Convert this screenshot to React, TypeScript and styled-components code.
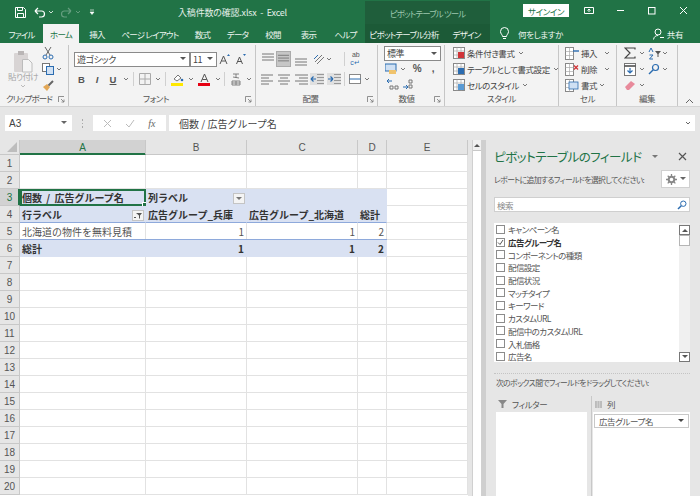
import React from "react";
import styled, { createGlobalStyle } from "styled-components";

const UI = `"Noto Sans CJK JP", "Noto Sans", sans-serif`;

const Global = createGlobalStyle`
  html, body { margin: 0; padding: 0; width: 700px; height: 496px; overflow: hidden; background: #e6e6e6; }
  #root { width: 700px; height: 496px; }
  * { box-sizing: border-box; }
`;

const Page = styled.div`
  width: 700px; height: 496px; overflow: hidden; display: flex; flex-direction: column;
  font-family: ${UI}; font-size: 8.5px; letter-spacing: -0.4px; color: #444; font-feature-settings: "palt";
`;

/* Title bar */
const TitleBar = styled.div`
  height: 24px; background: #217346; display: flex; align-items: stretch; color: #fff; flex: none;
`;
const Qat = styled.div`
  width: 160px; flex: none; display: flex; align-items: center; padding-left: 14px;
`;
const QatBtn = styled.span<{ $w: number; $dim?: boolean }>`
  width: ${p => p.$w}px; display: flex; align-items: center; justify-content: center; opacity: ${p => (p.$dim ? 0.3 : 1)};
`;
const DocTitle = styled.div`
  width: 145px; flex: none; display: flex; align-items: center; justify-content: center; font-size: 9px; letter-spacing: -0.2px; color: #e6f0ea; white-space: nowrap;
`;
const TitleGap = styled.div`width: 60px; flex: none;`;
const ContextHead = styled.div`
  width: 125px; flex: none; background: #1f5e3b; margin-top: 1px; display: flex; align-items: center; justify-content: center;
  color: #9cc7ae; letter-spacing: -0.9px;
`;
const WindowArea = styled.div`
  flex: 1; display: flex; align-items: center; padding-bottom: 3px;
`;
const SignIn = styled.span`
  margin-left: 33px; width: 46px; height: 13px; background: #fff; color: #217346;
  display: flex; align-items: center; justify-content: center; margin-right: 4px;
`;
const WinBtn = styled.span`
  width: 31.5px; display: flex; justify-content: center; align-items: center;
`;

/* Tabs */
const TabBar = styled.div`
  height: 19px; background: #217346; display: flex; align-items: stretch; flex: none; color: #fff; letter-spacing: -0.8px;
`;
const Tab = styled.div<{ $w: number; $active?: boolean }>`
  width: ${p => p.$w}px; flex: none; display: flex; align-items: center; justify-content: center; white-space: nowrap;
  color: ${p => (p.$active ? "#217346" : "#eef5f0")};
  background: ${p => (p.$active ? "#f3f3f3" : "transparent")};
`;
const ContextTabs = styled.div`
  width: 125px; flex: none; background: #1c5a37; display: flex; align-items: stretch;
`;
const TellMe = styled.div`
  flex: 1; display: flex; align-items: center; padding-left: 10px; gap: 9px; color: #eef5f0; letter-spacing: -0.4px;
`;
const Share = styled.div`
  margin-left: auto; padding-right: 17px; display: flex; align-items: center; gap: 3px;
`;

/* Ribbon */
const Ribbon = styled.div`
  height: 64px; background: #f3f3f3; display: flex; flex: none; border-bottom: 1px solid #d4d4d4;
`;
const Group = styled.div<{ $w: number }>`
  width: ${p => p.$w}px; flex: none; display: flex; flex-direction: column; border-right: 1px solid #c6c6c6; margin-top: 2px;
`;
const GroupBody = styled.div<{ $pad?: number }>`
  flex: 1; min-height: 0; display: flex; padding-left: ${p => p.$pad ?? 0}px;
`;
const Stack = styled.div<{ $gap?: number; $top?: number }>`
  display: flex; flex-direction: column; gap: ${p => p.$gap ?? 0}px; padding-top: ${p => p.$top ?? 0}px;
`;
const Row = styled.div<{ $h?: number }>`
  display: flex; align-items: center; height: ${p => p.$h ?? 16}px; white-space: nowrap;
`;
const GroupLabel = styled.div<{ $pr?: number; $tight?: boolean }>`
  height: 14px; flex: none; display: flex; align-items: center; justify-content: center; color: #555; position: relative;
  padding-right: ${p => p.$pr ?? 0}px; padding-bottom: 2px; letter-spacing: ${p => (p.$tight ? "-0.9px" : "-0.4px")};
`;
const Launcher = styled.span`
  position: absolute; right: 3px; top: 4px; display: flex;
`;
const CollapseCol = styled.div`
  flex: 1; display: flex; align-items: flex-end; justify-content: center; padding-bottom: 2px;
`;
const Tool = styled.span<{ $w: number; $sel?: boolean }>`
  width: ${p => p.$w}px; height: 16px; flex: none; display: flex; align-items: center; justify-content: center;
  color: #444; background: ${p => (p.$sel ? "#c6c6c6" : "transparent")};
  border: ${p => (p.$sel ? "1px solid #ababab" : "none")};
`;
const RowSep = styled.span<{ $ml?: number }>`
  width: 1px; height: 14px; background: #d0d0d0; margin: 0 3px 0 ${p => p.$ml ?? 2}px; flex: none;
`;
const Select = styled.div<{ $w: number; $dark?: boolean }>`
  width: ${p => p.$w}px; height: 15px; flex: none; background: #fff; border: 1px solid ${p => (p.$dark ? "#8a8a8a" : "#ababab")};
  display: flex; align-items: center; justify-content: space-between; padding: 0 3px 0 2px; font-size: 9px; color: #444;
`;
const PasteCol = styled.div`
  width: 34px; flex: none; margin-left: 6px; display: flex; flex-direction: column; align-items: center; color: #a8a8a8; padding-top: 5px; letter-spacing: -0.6px;
`;
const PasteText = styled.span`margin-top: -2px; margin-bottom: 3px; line-height: 10px; white-space: nowrap;`;
const Letter = styled.span<{ $i?: boolean; $u?: boolean }>`
  font-family: "Liberation Sans", sans-serif; font-weight: 700; font-size: 9.5px; color: #555; letter-spacing: 0;
  font-style: ${p => (p.$i ? "italic" : "normal")}; text-decoration: ${p => (p.$u ? "underline" : "none")};
`;
const StyleText = styled.span`margin-left: 2px; color: #444;`;
const SymbolText = styled.span`font-family: "Liberation Sans", sans-serif; font-size: 10px; color: #555; font-weight: 700;`;
const WrapGlyph = styled.span`
  display: flex; flex-direction: column; align-items: flex-end; font-family: "Liberation Sans", sans-serif; font-size: 7px; line-height: 8px; color: #555; letter-spacing: 0;
`;
const WrapSecond = styled.span`color: #2b6cb0;`;

/* Formula bar */
const FormulaBar = styled.div`
  height: 33px; flex: none; background: #e6e6e6; display: flex; padding: 8px 5px 3px 5px; align-items: flex-start;
`;
const NameBox = styled.div`
  width: 67px; height: 16px; background: #fff; display: flex; align-items: center; justify-content: space-between; padding: 0 5px 0 4px;
  font-family: "Liberation Sans", sans-serif; font-size: 10px; letter-spacing: 0; color: #444;
`;
const Dots = styled.span`
  width: 21px; display: flex; flex-direction: column; align-items: center; gap: 2px; padding-top: 4px;
`;
const Dot = styled.i`width: 1.5px; height: 1.5px; background: #aaa; display: block;`;
const FxBox = styled.div`
  width: 73px; height: 16px; background: #fff; display: flex; align-items: center; justify-content: space-around; padding: 0 4px;
`;
const FxText = styled.span`font-family: "Liberation Serif", serif; font-style: italic; font-size: 10px; letter-spacing: 0; color: #666;`;
const FormulaInput = styled.div`
  flex: 1; margin-left: 3px; height: 16px; background: #fff; display: flex; align-items: center; justify-content: space-between;
  padding: 0 4px 0 10px; font-size: 10px; letter-spacing: 0; color: #444; font-feature-settings: normal;
`;

/* Main */
const Main = styled.div`flex: 1; min-height: 0; display: flex; background: #e6e6e6;`;
const Sheet = styled.div`width: 468px; flex: none; background: #fff; overflow: hidden; letter-spacing: 0;`;
const SheetRow = styled.div<{ $h: number }>`
  display: grid; grid-template-columns: 20px 126px 101px 111px 29px 81px; height: ${p => p.$h}px;
`;
const Corner = styled.div`
  background: #e6e6e6; border-right: 1px solid #c8c8c8; border-bottom: 1px solid #c8c8c8; display: flex; align-items: flex-end; justify-content: flex-end; padding: 0 2px 2px 0;
`;
const CornerTri = styled.i`
  width: 0; height: 0; border-left: 10px solid transparent; border-bottom: 10px solid #bdbdbd; display: block;
`;
const ColHead = styled.div<{ $sel?: boolean }>`
  background: ${p => (p.$sel ? "#d2d2d2" : "#e6e6e6")}; border-right: 1px solid #c8c8c8;
  border-bottom: 1px solid ${p => (p.$sel ? "#217346" : "#c8c8c8")}; box-shadow: ${p => (p.$sel ? "inset 0 -1px 0 #217346" : "none")};
  display: flex; align-items: center; justify-content: center; font-family: "Liberation Sans", sans-serif; font-size: 10px;
  color: ${p => (p.$sel ? "#217346" : "#555")};
`;
const RowHead = styled(ColHead)<{ $sel?: boolean }>`
  border-right: 1px solid ${p => (p.$sel ? "#217346" : "#c8c8c8")}; border-bottom: 1px solid #c8c8c8;
  box-shadow: ${p => (p.$sel ? "inset -1px 0 0 #217346" : "none")};
`;
const Cell = styled.div<{ $fill?: boolean; $bold?: boolean; $right?: boolean; $line?: "top" | "bottom"; $between?: boolean }>`
  position: relative; display: flex; align-items: center; white-space: nowrap; padding: 0 2px;
  justify-content: ${p => (p.$between ? "space-between" : p.$right ? "flex-end" : "flex-start")};
  background: ${p => (p.$fill ? "#d9e1f2" : "#fff")};
  font-size: 10px; word-spacing: 2px; font-weight: ${p => (p.$bold ? 700 : 400)}; color: ${p => (p.$bold ? "#333" : "#555")};
  font-feature-settings: normal;
  border-right: 1px solid ${p => (p.$fill ? "#d9e1f2" : "#e2e2e2")};
  border-bottom: 1px solid ${p => (p.$line === "bottom" ? "#8ea9db" : p.$fill ? "#d9e1f2" : "#e2e2e2")};
  box-shadow: ${p => (p.$line === "top" ? "0 -1px 0 #8ea9db" : "none")};
`;
const ActiveCell = styled(Cell)`
  outline: 2px solid #217346; outline-offset: -2px; padding-left: 2px;
`;
const FillHandle = styled.i`
  position: absolute; right: -2px; bottom: -2px; width: 5px; height: 5px; background: #217346; border: 1px solid #fff; display: block;
`;
const FilterBtn = styled.span`
  width: 12px; height: 11px; background: #f4f4f4; border: 1px solid #c4c4c4; display: flex; align-items: center; justify-content: center; flex: none;
  align-self: flex-end; margin-right: -1px; margin-bottom: 1px;
`;

const VScroll = styled.div`
  width: 18px; flex: none; padding-left: 4px; display: flex; border-right: 4px solid #cfcfcf;
`;
const VTrack = styled.div`
  width: 10px; background: #fff; border-left: 1px solid #d0d0d0; border-right: 1px solid #d0d0d0; display: flex; flex-direction: column;
`;
const VUp = styled.div`
  height: 11px; background: #f0f0f0; border-bottom: 1px solid #c8c8c8; display: flex; align-items: center; justify-content: center;
`;

/* Panel */
const Panel = styled.div`
  flex: 1; padding: 0 10px 0 8px; display: flex; flex-direction: column; min-width: 0;
`;
const PanelHead = styled.div`
  height: 23px; margin-top: 5px; display: flex; align-items: center; flex: none;
`;
const PanelTitle = styled.div`font-size: 12.5px; letter-spacing: -0.5px; color: #217346; white-space: nowrap; width: 158px;`;
const PanelClose = styled.span`margin-left: auto; margin-right: 3px; display: flex;`;
const PickRow = styled.div`
  height: 18px; margin-top: 2px; display: flex; align-items: center; justify-content: space-between; font-size: 7.8px; letter-spacing: -0.6px; color: #555; flex: none; white-space: nowrap;
`;
const GearBox = styled.span`
  width: 29px; height: 18px; background: #fff; border: 1px solid #d0d0d0; display: flex; align-items: center; justify-content: center; gap: 3px;
`;
const SearchBox = styled.div`
  height: 15px; margin-top: 9px; background: #fff; border: 1px solid #cfcfcf; display: flex; align-items: center; justify-content: space-between;
  padding: 0 2px; color: #888; flex: none;
`;
const FieldList = styled.div`
  height: 139px; margin-top: 11px; background: #fff; display: flex; flex: none; overflow: hidden;
`;
const Fields = styled.div`flex: 1; padding-top: 0;`;
const Field = styled.div<{ $on?: boolean }>`
  height: 12.7px; display: flex; align-items: center; gap: 3px; padding-left: 2px; white-space: nowrap;
  letter-spacing: -0.6px; color: ${p => (p.$on ? "#333" : "#555")}; font-weight: ${p => (p.$on ? 700 : 400)};
`;
const Check = styled.span`
  width: 9px; height: 9px; border: 1px solid #8c8c8c; background: #fff; display: flex; align-items: center; justify-content: center; flex: none;
`;
const ListScroll = styled.div`
  width: 11px; flex: none; background: #f0f0f0; display: flex; flex-direction: column; justify-content: space-between; padding-top: 2px;
`;
const ScrollTop = styled.div`display: flex; flex-direction: column;`;
const ScrollBtn = styled.div<{ $h: number; $dark?: boolean }>`
  height: ${p => p.$h}px; background: #fff; border: 1px solid ${p => (p.$dark ? "#777" : "#b5b5b5")}; display: flex; align-items: center; justify-content: center;
`;
const DottedLine = styled.div`height: 0; margin-top: 11px; border-top: 1px dotted #c4c4c4; flex: none;`;
const DragHint = styled.div`
  margin-top: 1px; height: 14px; padding-left: 2px; display: flex; align-items: center; font-size: 7.8px; letter-spacing: -0.6px; color: #555; white-space: nowrap; flex: none;
`;
const Areas = styled.div`flex: 1; margin-top: 7px; display: grid; grid-template-columns: 93px 1fr; min-height: 0;`;
const Area = styled.div<{ $right?: boolean }>`
  display: flex; flex-direction: column; min-height: 0; margin-left: 2px;
  ${p => (p.$right ? "border-left: 1px solid #c8c8c8; margin-left: 4px; padding-left: 1px;" : "")}
`;
const AreaHead = styled.div`
  height: 16px; flex: none; display: flex; align-items: center; gap: 5px; padding-left: 2px; color: #555;
`;
const AreaBox = styled.div`flex: 1; background: #fff; padding: 2px 1px;`;
const AreaItem = styled.div`
  height: 14px; border: 1px solid #c8c8c8; background: #fff; display: flex; align-items: center; justify-content: space-between;
  padding: 0 4px; color: #555;
`;

/* Icons */
const Chev = ({ c = "#777" }: { c?: string }) => (
  <svg width="6" height="4" viewBox="0 0 6 4"><path d="M1 1l2 2 2-2" fill="none" stroke={c} /></svg>
);
const Tri = ({ c = "#555", up }: { c?: string; up?: boolean }) => (
  <svg width="6" height="4" viewBox="0 0 6 4"><path d={up ? "M0 4h6L3 1z" : "M0 0h6L3 3z"} fill={c} /></svg>
);
const Launch = () => (
  <svg width="7" height="7" viewBox="0 0 7 7"><path d="M.5 6V.5H6M3 3l3 3M6 3.500V6H3.500" fill="none" stroke="#777" strokeWidth=".8" /></svg>
);
const Lines = ({ kind }: { kind: "l" | "c" | "r" }) => {
  const a = kind === "l" ? [[1, 13], [1, 9], [1, 13], [1, 9]] : kind === "c" ? [[2, 14], [4, 12], [2, 14], [4, 12]] : [[2, 15], [6, 15], [2, 15], [6, 15]];
  return (
    <svg width="16" height="14" viewBox="0 0 16 14">
      {a.map((v, i) => <path key={i} d={`M${v[0]} ${3 + i * 3}H${v[1]}`} stroke="#777" />)}
    </svg>
  );
};
const VAlign = ({ y }: { y: number }) => (
  <svg width="14" height="14" viewBox="0 0 14 14">
    {[0, 3, 6].map(d => <path key={d} d={`M1 ${y + d}H13`} stroke="#777" />)}
  </svg>
);
const Indent = ({ dir }: { dir: "in" | "out" }) => (
  <svg width="14" height="14" viewBox="0 0 14 14">
    <rect x="0" y="1" width="14" height="12" fill="#e0e0e0" />
    {[3, 6, 9, 12].map(y => <path key={y} d={`M7 ${y - .5}H14`} stroke="#999" />)}
    <path d={dir === "out" ? "M1 7h5M1 7l2.500-2.500M1 7l2.500 2.500" : "M6 7H1M6 7L3.500 4.500M6 7L3.500 9.500"} fill="none" stroke="#2b6cb0" strokeWidth="1.2" />
  </svg>
);
const StyleIcon = ({ accent }: { accent: string }) => (
  <svg width="12" height="12" viewBox="0 0 12 12">
    <rect x=".5" y=".5" width="11" height="11" fill="#fff" stroke="#888" />
    <path d="M.5 4h11M.5 8h11M4 .5v11M8 .5v11" stroke="#aaa" strokeWidth=".7" />
    <rect x="5" y="5" width="6" height="6" fill={accent} />
  </svg>
);
const CellIcon = ({ mark }: { mark: "plus" | "x" | "fmt" }) => (
  <svg width="14" height="13" viewBox="0 0 14 13">
    <rect x=".5" y=".5" width="8" height="12" fill="#fff" stroke="#888" />
    <path d="M.5 4.500h8M.5 8.500h8M4.500 .5v12" stroke="#aaa" strokeWidth=".7" />
    {mark === "plus" && <path d="M8 4h6" stroke="#2b6cb0" strokeWidth="1.4" />}
    {mark === "x" && <path d="M9 2.500l4 4M13 2.500l-4 4" stroke="#d13438" strokeWidth="1.3" />}
    {mark === "fmt" && <rect x="4" y="3" width="9" height="7" fill="#cfe0f3" stroke="#2b6cb0" strokeWidth=".8" />}
  </svg>
);
const FunnelSmall = () => (
  <svg width="8" height="7" viewBox="0 0 8 7"><path d="M2 1h6L6 3.500V6.500H5V3.500z" fill="#555" /><path d="M0 5h2v1H0z" fill="#555" /></svg>
);

const colTemplate = ["A", "B", "C", "D", "E"];
const fields = ["キャンペーン名", "広告グループ名", "コンポーネントの種類", "配信設定", "配信状況", "マッチタイプ", "キーワード", "カスタムURL", "配信中のカスタムURL", "入札価格", "広告名"];

const PlainRow = ({ n }: { n: number }) => (
  <SheetRow $h={17}>
    <RowHead>{n}</RowHead>
    <Cell /><Cell /><Cell /><Cell /><Cell />
  </SheetRow>
);

export default function App() {
  const plain = Array.from({ length: 14 }, (_, i) => i + 7);
  return (
    <Page>
      <Global />
      <TitleBar>
        <Qat>
          <QatBtn $w={13}>
            <svg width="11" height="11" viewBox="0 0 11 11"><path d="M.5.5h8l2 2v8H.5z" fill="none" stroke="#fff" /><path d="M2.500.5v3h5v-3M2.500 10.500v-4h6v4" fill="none" stroke="#fff" /></svg>
          </QatBtn>
          <QatBtn $w={6} />
          <QatBtn $w={13}>
            <svg width="12" height="11" viewBox="0 0 12 11"><path d="M1 4h6.500a3 3 0 010 6H5M1 4l3-3M1 4l3 3" fill="none" stroke="#fff" strokeWidth="1.2" /></svg>
          </QatBtn>
          <QatBtn $w={9}><Chev c="#cfe3d7" /></QatBtn>
          <QatBtn $w={4} />
          <QatBtn $w={14} $dim>
            <svg width="12" height="11" viewBox="0 0 12 11"><path d="M11 4H4.500a3 3 0 000 6H7M11 4L8 1M11 4L8 7" fill="none" stroke="#fff" strokeWidth="1.2" /></svg>
          </QatBtn>
          <QatBtn $w={9} $dim><Chev c="#fff" /></QatBtn>
          <QatBtn $w={20}>
            <svg width="6" height="6" viewBox="0 0 6 6"><path d="M1 1h4M1 3h4L3 5.500z" fill="#fff" stroke="#fff" strokeWidth=".6" /></svg>
          </QatBtn>
        </Qat>
        <DocTitle>入稿件数の確認.xlsx&nbsp; -&nbsp; Excel</DocTitle>
        <TitleGap />
        <ContextHead>ピボットテーブル ツール</ContextHead>
        <WindowArea>
          <SignIn>サインイン</SignIn>
          <WinBtn>
            <svg width="10" height="9" viewBox="0 0 10 9"><path d="M.5 1.500h9v6h-9z" fill="none" stroke="#fff" /><path d="M5 6V3M3.500 4.500L5 3l1.500 1.500" fill="none" stroke="#fff" /></svg>
          </WinBtn>
          <WinBtn><svg width="9" height="3" viewBox="0 0 9 3"><path d="M1 1.500h7" stroke="#fff" /></svg></WinBtn>
          <WinBtn><svg width="9" height="9" viewBox="0 0 9 9"><rect x="1.500" y="1.500" width="6.500" height="6.500" fill="none" stroke="#fff" /></svg></WinBtn>
          <WinBtn><svg width="9" height="9" viewBox="0 0 9 9"><path d="M1 1l7 7M8 1L1 8" stroke="#fff" /></svg></WinBtn>
        </WindowArea>
      </TitleBar>

      <TabBar>
        <Tab $w={43}>ファイル</Tab>
        <Tab $w={36} $active>ホーム</Tab>
        <Tab $w={36}>挿入</Tab>
        <Tab $w={70}>ページ レイアウト</Tab>
        <Tab $w={35}>数式</Tab>
        <Tab $w={35}>データ</Tab>
        <Tab $w={36}>校閲</Tab>
        <Tab $w={35}>表示</Tab>
        <Tab $w={39}>ヘルプ</Tab>
        <ContextTabs>
          <Tab $w={78}>ピボットテーブル分析</Tab>
          <Tab $w={47}>デザイン</Tab>
        </ContextTabs>
        <TellMe>
          <svg width="9" height="13" viewBox="0 0 9 13"><path d="M2.500 9.500C2.500 7.500.5 7 .5 4.500a4 4 0 018 0C8.500 7 6.500 7.500 6.500 9.500zM3 11.500h3" fill="none" stroke="#fff" /></svg>
          <span>何をしますか</span>
          <Share>
            <svg width="11" height="12" viewBox="0 0 11 12"><circle cx="5" cy="4" r="3" fill="none" stroke="#fff" /><path d="M.5 11.500C1 8.500 3 7.500 5 7.500M7 9.500h4" fill="none" stroke="#fff" /></svg>
            <span>共有</span>
          </Share>
        </TellMe>
      </TabBar>

      <Ribbon>
        <Group $w={69}>
          <GroupBody>
            <PasteCol>
              <svg width="20" height="23" viewBox="0 0 20 23">
                <rect x="1" y="3" width="14" height="19" rx="1" fill="#d8d4d4" />
                <rect x="5" y="1" width="6" height="4" fill="#b9b5b5" />
                <path d="M9.500 9.500h6l3.500 3.500v9h-9.500z" fill="#f5f5f5" stroke="#bcbcbc" />
              </svg>
              <PasteText>貼り付け</PasteText>
              <Chev c="#bbb" />
            </PasteCol>
            <Stack>
              <Row>
                <Tool $w={16}>
                  <svg width="12" height="14" viewBox="0 0 12 14"><path d="M3 1l5 8M9 1L4 9" stroke="#666" /><circle cx="3" cy="11" r="2" fill="none" stroke="#2b6cb0" /><circle cx="9" cy="11" r="2" fill="none" stroke="#2b6cb0" /></svg>
                </Tool>
              </Row>
              <Row>
                <Tool $w={16}>
                  <svg width="12" height="12" viewBox="0 0 12 12"><rect x=".5" y=".5" width="7" height="8" fill="#fff" stroke="#777" /><rect x="4.500" y="3.500" width="7" height="8" fill="#cfe0f3" stroke="#2b6cb0" /></svg>
                </Tool>
                <Chev />
              </Row>
              <Row>
                <Tool $w={16}>
                  <svg width="13" height="13" viewBox="0 0 13 13"><path d="M1 8l4-3 3 3-3 4z" fill="#e3a857" /><path d="M6.500 6.500L11 2" stroke="#666" strokeWidth="2" /></svg>
                </Tool>
              </Row>
            </Stack>
          </GroupBody>
          <GroupLabel $pr={10} $tight>クリップボード<Launcher><Launch /></Launcher></GroupLabel>
        </Group>

        <Group $w={187}>
          <GroupBody $pad={5}>
            <Stack $top={6} $gap={4}>
              <Row>
                <Select $w={116} $dark>遊ゴシック<Tri /></Select>
                <Select $w={27} $dark>11<Tri /></Select>
                <Tool $w={16}>
                  <svg width="12" height="12" viewBox="0 0 12 12"><path d="M1 11l3.500-8L8 11M2.500 8h4" fill="none" stroke="#555" /><path d="M8 3l1.500-2L11 3z" fill="#2b6cb0" /></svg>
                </Tool>
                <Tool $w={16}>
                  <svg width="12" height="12" viewBox="0 0 12 12"><path d="M1.500 11L4.500 4l3 7M2.500 8.500h4" fill="none" stroke="#555" /><path d="M8 1l1.500 2L11 1z" fill="#2b6cb0" /></svg>
                </Tool>
              </Row>
              <Row>
                <Tool $w={15}><Letter>B</Letter></Tool>
                <Tool $w={16}><Letter $i>I</Letter></Tool>
                <Tool $w={16}><Letter $u>U</Letter></Tool>
                <Tool $w={10}><Chev /></Tool>
                <RowSep />
                <Tool $w={16}>
                  <svg width="12" height="12" viewBox="0 0 12 12"><path d="M.5.5h11v11H.5zM6 .5v11M.5 6h11" fill="none" stroke="#aaa" /></svg>
                </Tool>
                <Tool $w={10}><Chev /></Tool>
                <RowSep />
                <Tool $w={17}>
                  <svg width="13" height="14" viewBox="0 0 13 14"><path d="M3 7l4-4 3 3-4 3z" fill="#fff" stroke="#777" /><circle cx="11" cy="8" r="1.300" fill="#2b6cb0" /><rect x="0" y="11" width="12" height="3" fill="#ffe800" /></svg>
                </Tool>
                <Tool $w={9}><Chev /></Tool>
                <Tool $w={18}>
                  <svg width="13" height="14" viewBox="0 0 13 14"><path d="M3 10l3.500-8L10 10M4.300 7.500h4.500" fill="none" stroke="#555" /><rect x="0" y="11" width="12" height="3" fill="#e60012" /></svg>
                </Tool>
                <Tool $w={9}><Chev /></Tool>
                <RowSep />
                <Tool $w={16}>
                  <svg width="10" height="14" viewBox="0 0 10 14"><path d="M2 2h6M5 2v4M2 5l6 1M1 9h8v4H1zM1 11h8M5 9v4" fill="none" stroke="#777" strokeWidth=".9" /></svg>
                </Tool>
                <Tool $w={10}><Chev /></Tool>
              </Row>
            </Stack>
          </GroupBody>
          <GroupLabel $pr={12}>フォント<Launcher><Launch /></Launcher></GroupLabel>
        </Group>

        <Group $w={122}>
          <GroupBody $pad={4}>
            <Stack $top={6} $gap={4}>
              <Row>
                <Tool $w={16}><VAlign y={2} /></Tool>
                <Tool $w={15} $sel><VAlign y={3} /></Tool>
                <Tool $w={20}><VAlign y={7} /></Tool>
                <Tool $w={15}>
                  <svg width="12" height="13" viewBox="0 0 12 13"><path d="M2 9l7-7M4 11l7-7" stroke="#777" /><path d="M1 6l4-4" stroke="#2b6cb0" /></svg>
                </Tool>
                <Tool $w={6}><Chev /></Tool>
                <RowSep $ml={12} />
                <Tool $w={14}>
                  <WrapGlyph>ab<WrapSecond>c↵</WrapSecond></WrapGlyph>
                </Tool>
              </Row>
              <Row>
                <Tool $w={16}><Lines kind="l" /></Tool>
                <Tool $w={16}><Lines kind="c" /></Tool>
                <Tool $w={17}><Lines kind="r" /></Tool>
                <Tool $w={16}><Indent dir="out" /></Tool>
                <Tool $w={17}><Indent dir="in" /></Tool>
                <RowSep />
                <Tool $w={14}>
                  <svg width="12" height="12" viewBox="0 0 12 12"><rect x=".5" y="1.500" width="11" height="9" fill="#fff" stroke="#888" /><path d="M.5 6h11" stroke="#2b6cb0" /></svg>
                </Tool>
                <Tool $w={10}><Chev /></Tool>
              </Row>
            </Stack>
          </GroupBody>
          <GroupLabel $pr={12}>配置<Launcher><Launch /></Launcher></GroupLabel>
        </Group>

        <Group $w={67}>
          <GroupBody $pad={6}>
            <Stack $top={1}>
              <Select $w={57} $dark>標準<Tri /></Select>
              <Row $h={15}>
                <Tool $w={14}>
                  <svg width="12" height="12" viewBox="0 0 12 12"><rect x="0" y="1" width="11" height="7" fill="#cfe0f3" stroke="#2b6cb0" /><rect x="4" y="7" width="7" height="4" fill="#f0c36d" /></svg>
                </Tool>
                <Tool $w={10}><Chev /></Tool>
                <Tool $w={18}><SymbolText>%</SymbolText></Tool>
                <Tool $w={14}><SymbolText>,</SymbolText></Tool>
              </Row>
              <Row $h={15}>
                <Tool $w={16}>
                  <svg width="13" height="12" viewBox="0 0 13 12"><path d="M1 3h5M1 3l2-2M1 3l2 2" fill="none" stroke="#2b6cb0" /><path d="M4 8h3v3H4zM9 8h3v3H9z" fill="none" stroke="#777" /></svg>
                </Tool>
                <Tool $w={16}>
                  <svg width="13" height="12" viewBox="0 0 13 12"><path d="M7 2h3v3H7zM7 7h3v3H7z" fill="none" stroke="#777" /><path d="M1 9h5M6 9L4 7M6 9l-2 2" fill="none" stroke="#2b6cb0" /></svg>
                </Tool>
              </Row>
            </Stack>
          </GroupBody>
          <GroupLabel $pr={9}>数値<Launcher><Launch /></Launcher></GroupLabel>
        </Group>

        <Group $w={114}>
          <GroupBody $pad={8}>
            <Stack>
              <Row><StyleIcon accent="#d13438" /><StyleText>条件付き書式</StyleText><Tool $w={12}><Chev /></Tool></Row>
              <Row><StyleIcon accent="#2b6cb0" /><StyleText>テーブルとして書式設定</StyleText><Tool $w={12}><Chev /></Tool></Row>
              <Row><StyleIcon accent="#5a9bd5" /><StyleText>セルのスタイル</StyleText><Tool $w={12}><Chev /></Tool></Row>
            </Stack>
          </GroupBody>
          <GroupLabel>スタイル</GroupLabel>
        </Group>

        <Group $w={58}>
          <GroupBody $pad={6}>
            <Stack>
              <Row><CellIcon mark="plus" /><StyleText>挿入</StyleText><Tool $w={20}><Chev /></Tool></Row>
              <Row><CellIcon mark="x" /><StyleText>削除</StyleText><Tool $w={20}><Chev /></Tool></Row>
              <Row><CellIcon mark="fmt" /><StyleText>書式</StyleText><Tool $w={10}><Chev /></Tool></Row>
            </Stack>
          </GroupBody>
          <GroupLabel>セル</GroupLabel>
        </Group>

        <Group $w={61}>
          <GroupBody $pad={6}>
            <Stack>
              <Row>
                <Tool $w={14}><svg width="12" height="12" viewBox="0 0 12 12"><path d="M11 2.500V1H1l5 5-5 5h10V9.500" fill="none" stroke="#444" strokeWidth="1.200" /></svg></Tool>
                <Tool $w={10}><Chev /></Tool>
                <Tool $w={14}>
                  <svg width="13" height="13" viewBox="0 0 13 13"><path d="M1 5l2-4 2 4M1.500 8h3.500L1.500 12H5" fill="none" stroke="#2b6cb0" /><path d="M7 4h6L10.500 7v3h-1V7z" fill="#555" /></svg>
                </Tool>
                <Tool $w={8}><Chev /></Tool>
              </Row>
              <Row>
                <Tool $w={14}><svg width="12" height="13" viewBox="0 0 12 13"><rect x=".5" y=".5" width="11" height="12" fill="#fff" stroke="#777" /><path d="M.5 3h11" stroke="#444" strokeWidth="1.500" /><path d="M6 5v5M3.500 7.500L6 10l2.500-2.500" fill="none" stroke="#2b6cb0" strokeWidth="1.200" /></svg></Tool>
                <Tool $w={10}><Chev /></Tool>
                <Tool $w={14}><svg width="12" height="12" viewBox="0 0 12 12"><circle cx="7.500" cy="4.500" r="3" fill="none" stroke="#2b6cb0" strokeWidth="1.200" /><path d="M5 7l-4 4" stroke="#2b6cb0" strokeWidth="1.500" /></svg></Tool>
                <Tool $w={8}><Chev /></Tool>
              </Row>
              <Row>
                <Tool $w={14}><svg width="12" height="11" viewBox="0 0 12 11"><path d="M1 7l6-6 4 3-6 6H3z" fill="#e88a9b" /></svg></Tool>
                <Tool $w={10}><Chev /></Tool>
              </Row>
            </Stack>
          </GroupBody>
          <GroupLabel>編集</GroupLabel>
        </Group>

        <CollapseCol>
          <svg width="9" height="6" viewBox="0 0 9 6"><path d="M1 5l3.500-3.500L8 5" fill="none" stroke="#666" /></svg>
        </CollapseCol>
      </Ribbon>

      <FormulaBar>
        <NameBox>A3<Tri c="#666" /></NameBox>
        <Dots><Dot /><Dot /><Dot /></Dots>
        <FxBox>
          <svg width="9" height="9" viewBox="0 0 9 9"><path d="M1 1l7 7M8 1L1 8" stroke="#bbb" /></svg>
          <svg width="10" height="9" viewBox="0 0 10 9"><path d="M1 5l3 3 5-7" fill="none" stroke="#bbb" /></svg>
          <FxText>fx</FxText>
        </FxBox>
        <FormulaInput>個数 / 広告グループ名<Chev c="#666" /></FormulaInput>
      </FormulaBar>

      <Main>
        <Sheet>
          <SheetRow $h={15}>
            <Corner><CornerTri /></Corner>
            {colTemplate.map((c, i) => <ColHead key={c} $sel={i === 0}>{c}</ColHead>)}
          </SheetRow>
          <PlainRow n={1} />
          <PlainRow n={2} />
          <SheetRow $h={17}>
            <RowHead $sel>3</RowHead>
            <ActiveCell $fill $bold>個数 / 広告グループ名<FillHandle /></ActiveCell>
            <Cell $fill $bold $between>列ラベル<FilterBtn><Tri c="#777" /></FilterBtn></Cell>
            <Cell $fill /><Cell $fill /><Cell />
          </SheetRow>
          <SheetRow $h={17}>
            <RowHead>4</RowHead>
            <Cell $fill $bold $between $line="bottom">行ラベル<FilterBtn><FunnelSmall /></FilterBtn></Cell>
            <Cell $fill $bold $line="bottom">広告グループ_兵庫</Cell>
            <Cell $fill $bold $line="bottom">広告グループ_北海道</Cell>
            <Cell $fill $bold $line="bottom">総計</Cell>
            <Cell />
          </SheetRow>
          <SheetRow $h={17}>
            <RowHead>5</RowHead>
            <Cell>北海道の物件を無料見積</Cell>
            <Cell $right>1</Cell><Cell $right>1</Cell><Cell $right>2</Cell><Cell />
          </SheetRow>
          <SheetRow $h={17}>
            <RowHead>6</RowHead>
            <Cell $fill $bold $line="top">総計</Cell>
            <Cell $fill $bold $right $line="top">1</Cell>
            <Cell $fill $bold $right $line="top">1</Cell>
            <Cell $fill $bold $right $line="top">2</Cell>
            <Cell />
          </SheetRow>
          {plain.map(n => <PlainRow key={n} n={n} />)}
        </Sheet>

        <VScroll>
          <VTrack><VUp><Tri c="#555" up /></VUp></VTrack>
        </VScroll>

        <Panel>
          <PanelHead>
            <PanelTitle>ピボットテーブルのフィールド</PanelTitle>
            <Tri c="#777" />
            <PanelClose>
              <svg width="9" height="9" viewBox="0 0 9 9"><path d="M1 1l7 7M8 1L1 8" stroke="#555" strokeWidth="1.200" /></svg>
            </PanelClose>
          </PanelHead>
          <PickRow>
            <span>レポートに追加するフィールドを選択してください:</span>
            <GearBox>
              <svg width="11" height="11" viewBox="0 0 11 11"><circle cx="5.500" cy="5.500" r="2.800" fill="none" stroke="#888" strokeWidth="2" /><path d="M5.500 0v2M5.500 9v2M0 5.500h2M9 5.500h2M1.700 1.700l1.400 1.400M8 8l1.400 1.400M9.300 1.700L8 3.100M3.100 8L1.700 9.400" stroke="#888" strokeWidth="1.300" /></svg>
              <Tri c="#666" />
            </GearBox>
          </PickRow>
          <SearchBox>
            検索
            <svg width="10" height="10" viewBox="0 0 10 10"><circle cx="6.300" cy="3.700" r="2.700" fill="none" stroke="#2b6cb0" /><path d="M4.300 5.700L1 9" stroke="#2b6cb0" strokeWidth="1.500" /></svg>
          </SearchBox>
          <FieldList>
            <Fields>
              {fields.map((f, i) => (
                <Field key={f} $on={i === 1}>
                  <Check>
                    {i === 1 && <svg width="7" height="7" viewBox="0 0 7 7"><path d="M1 3.500l2 2 3-4.500" fill="none" stroke="#555" /></svg>}
                  </Check>
                  {f}
                </Field>
              ))}
            </Fields>
            <ListScroll>
              <ScrollTop>
                <ScrollBtn $h={10} $dark><Tri c="#555" up /></ScrollBtn>
                <ScrollBtn $h={11} />
              </ScrollTop>
              <ScrollBtn $h={10} $dark><Tri c="#555" /></ScrollBtn>
            </ListScroll>
          </FieldList>
          <DottedLine />
          <DragHint>次のボックス間でフィールドをドラッグしてください:</DragHint>
          <Areas>
            <Area>
              <AreaHead>
                <svg width="9" height="8" viewBox="0 0 9 8"><path d="M0 0h9L5.500 4v4h-2V4z" fill="#888" /></svg>
                フィルター
              </AreaHead>
              <AreaBox />
            </Area>
            <Area $right>
              <AreaHead>
                <svg width="7" height="7" viewBox="0 0 7 7"><path d="M0 0h7v7H0z" fill="#bbb" /><path d="M2.300 0v7M4.600 0v7" stroke="#e6e6e6" strokeWidth=".5" /></svg>
                列
              </AreaHead>
              <AreaBox>
                <AreaItem>広告グループ名<Tri c="#444" /></AreaItem>
              </AreaBox>
            </Area>
          </Areas>
        </Panel>
      </Main>
    </Page>
  );
}
